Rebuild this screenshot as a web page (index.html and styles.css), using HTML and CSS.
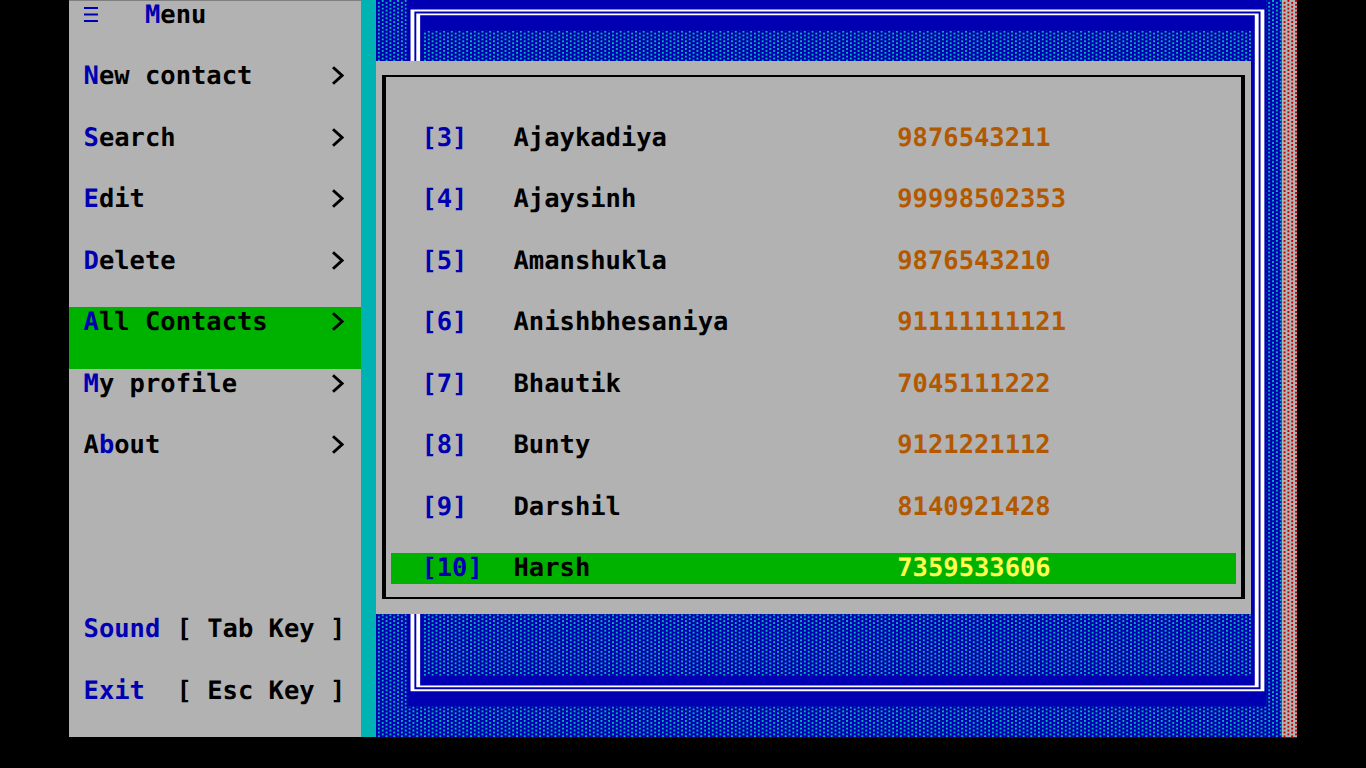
FILE: index.html
```html
<!DOCTYPE html>
<html lang="en">
<head>
<meta charset="utf-8">
<title>Contacts</title>
<link rel="stylesheet" href="styles.css">
</head>
<body>
<div class="screen">
  <svg class="backdrop" viewBox="0 0 640 400" preserveAspectRatio="none" aria-hidden="true">
    <defs>
      <pattern id="shade-cyan" width="4" height="2" patternUnits="userSpaceOnUse">
        <path fill="#00b2b2" d="M3 0h1v1h-1zM1 1h1v1h-1z"/>
      </pattern>
      <pattern id="shade-red" width="4" height="2" patternUnits="userSpaceOnUse">
        <path fill="#c00000" d="M3 0h1v1h-1zM1 1h1v1h-1z"/>
      </pattern>
      <symbol id="arrow" viewBox="0 0 12 19">
        <path d="M1 1.2L10 9.5L1 17.8" fill="none" stroke="#000" stroke-width="2.9"/>
      </symbol>
    </defs>
    <rect x="160" width="472" height="384" fill="#0000b2"/>
    <path fill="url(#shade-cyan)" d="M160 0h16v384h-16zM624 0h8v384h-8zM184 16h432v336H184zM176 368h448v16H176z"/>
    <rect x="632" width="8" height="384" fill="#b2b2b2"/>
    <rect x="632" width="8" height="384" fill="url(#shade-red)"/>
    <path fill="#fff" fill-rule="evenodd" d="M178 5H623V360H178zM180 6V359H621V6zM181 7H620V358H181zM183 8V357H618V8z"/>
  </svg>

  <nav class="menu">
    <div class="item"><span><svg class="bars" viewBox="0 0 14 15"><path d="M0 1h14M0 7.5h14M0 14h14"/></svg>&nbsp;&nbsp;&nbsp;<b>M</b>enu</span></div>
    <div class="item"><span><b>N</b>ew contact</span><svg class="arrow"><use href="#arrow"/></svg></div>
    <div class="item"><span><b>S</b>earch</span><svg class="arrow"><use href="#arrow"/></svg></div>
    <div class="item"><span><b>E</b>dit</span><svg class="arrow"><use href="#arrow"/></svg></div>
    <div class="item"><span><b>D</b>elete</span><svg class="arrow"><use href="#arrow"/></svg></div>
    <div class="item active"><span><b>A</b>ll Contacts</span><svg class="arrow"><use href="#arrow"/></svg></div>
    <div class="item"><span><b>M</b>y profile</span><svg class="arrow"><use href="#arrow"/></svg></div>
    <div class="item"><span>A<b>b</b>out</span><svg class="arrow"><use href="#arrow"/></svg></div>
    <div class="keys">
      <div class="item"><span><b>Sound</b></span><span>[ Tab Key ]</span></div>
      <div class="item"><span><b>Exit</b></span><span>[ Esc Key ]</span></div>
    </div>
  </nav>
  <div class="divider"></div>

  <main class="panel">
    <div class="list">
      <div class="row"><b>[3]</b><span>Ajaykadiya</span><span class="phone">9876543211</span></div>
      <div class="row"><b>[4]</b><span>Ajaysinh</span><span class="phone">99998502353</span></div>
      <div class="row"><b>[5]</b><span>Amanshukla</span><span class="phone">9876543210</span></div>
      <div class="row"><b>[6]</b><span>Anishbhesaniya</span><span class="phone">91111111121</span></div>
      <div class="row"><b>[7]</b><span>Bhautik</span><span class="phone">7045111222</span></div>
      <div class="row"><b>[8]</b><span>Bunty</span><span class="phone">9121221112</span></div>
      <div class="row"><b>[9]</b><span>Darshil</span><span class="phone">8140921428</span></div>
      <div class="row active"><b>[10]</b><span>Harsh</span><span class="phone">7359533606</span></div>
    </div>
  </main>
</div>
</body>
</html>
```
FILE: styles.css
```css
:root {
  --col: 15.35px;
  --line: 30.72px;
  --dot: 1.92px;
  --gray: #b2b2b2;
  --blue: #0000b2;
  --green: #00b200;
}

* { box-sizing: border-box; }

body {
  margin: 0;
  height: 768px;
  overflow: hidden;
  background: #000;
}

.screen {
  position: relative;
  display: flex;
  align-items: flex-start;
  width: 1228px;
  height: 768px;
  margin: 0 auto;
  color: #000;
  font: bold 25.49px/30.72px "DejaVu Sans Mono", monospace;
  text-rendering: geometricPrecision;
  white-space: nowrap;
}

.backdrop {
  position: absolute;
  inset: 0;
  width: 100%;
  height: 100%;
}

b { color: var(--blue); }

.menu {
  position: relative;
  width: calc(19 * var(--col));
  height: calc(24 * var(--line));
  background: var(--gray);
  box-shadow: inset 0 1px #808080;
}

.item {
  display: flex;
  justify-content: space-between;
  height: calc(2 * var(--line));
  padding: 0 var(--col) 0 14.6px;
}

.active { background: var(--green); }

.keys { margin-top: calc(4 * var(--line)); }

.bars {
  display: inline-block;
  width: var(--col);
  height: 15px;
  padding-right: 1.4px;
  vertical-align: 1px;
}

.bars path { stroke: var(--blue); stroke-width: 2; }

.arrow {
  width: 12px;
  height: 19px;
  margin: 5px 1.6px 0 0;
}

.divider {
  position: relative;
  width: var(--col);
  height: calc(24 * var(--line));
  background: #00b2b2;
}

.panel {
  position: relative;
  width: calc(57 * var(--col));
  height: calc(18 * var(--line));
  margin-top: calc(2 * var(--line));
  padding: calc(7 * var(--dot)) calc(3 * var(--dot)) calc(8 * var(--dot));
  background: var(--gray);
}

.list {
  height: 100%;
  padding: calc(24 * var(--dot)) 5.4px 0;
  border: solid #000;
  border-width: 2px 4px;
}

.row {
  display: grid;
  grid-template-columns: calc(6 * var(--col)) calc(25 * var(--col)) 1fr;
  height: var(--line);
  padding-left: calc(2 * var(--col) - 0.4px);
}

.row + .row { margin-top: var(--line); }

.phone { color: #b25900; }
.active .phone { color: #ffff50; }
```
